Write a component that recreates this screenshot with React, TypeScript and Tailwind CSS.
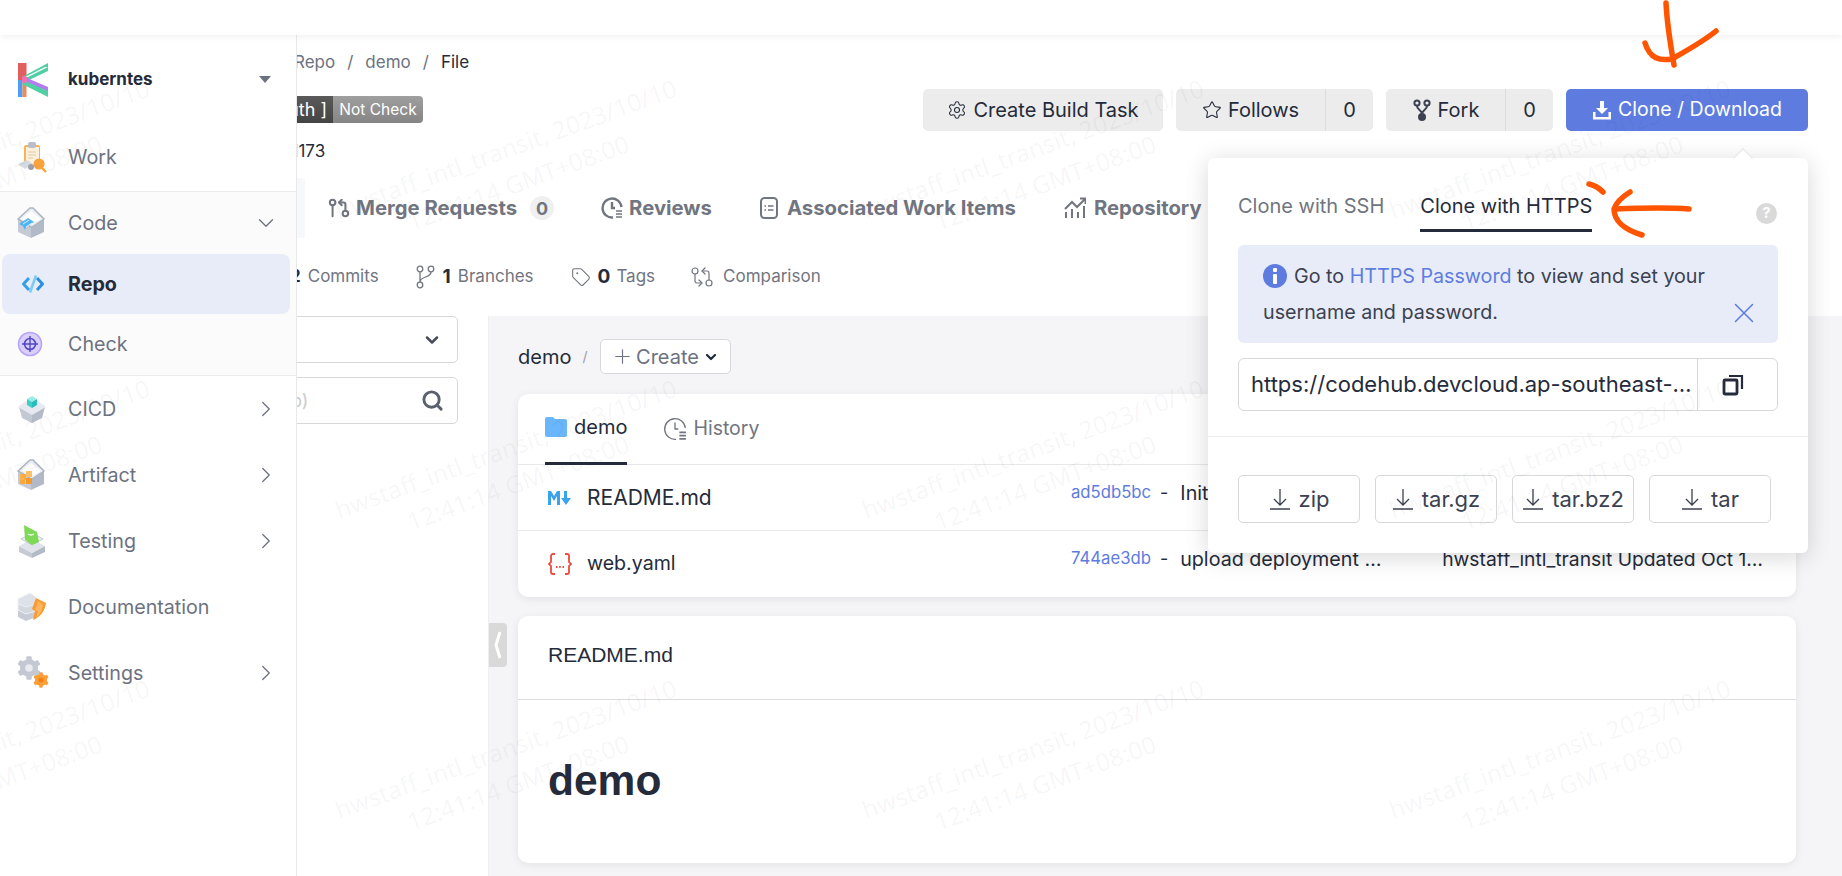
import React from "react";
import { ChevronDown, ChevronRight, GitCompareArrows, GitPullRequestArrow, Plus, Search, Settings, Star, Tag, X } from "lucide-react";

const HouseBase = ({ children }: { children?: React.ReactNode }) => (
  <svg width="29" height="32" viewBox="0 0 29 32">
    <polygon points="1,12 14,20 14,31 1,25" fill="#c5cad4" />
    <polygon points="14,20 27,12 27,25 14,31" fill="#b3bac7" />
    <polygon points="1,12 13,1 16,1 27,12 15,20 14,20" fill="#eceef2" stroke="#aeb5c2" strokeWidth="1.5" />
    <polygon points="4,12 14,4 24,12 15,17" fill="#fff" />
    {children}
  </svg>
);

const IconWork = () => (
  <svg width="30" height="32" viewBox="0 0 30 32">
    <rect x="7" y="4" width="16" height="21" rx="2" fill="#f8b25a" />
    <rect x="9" y="6" width="13" height="18" fill="#fdf0dc" />
    <rect x="11" y="1" width="8" height="6" rx="2" fill="#b9bfca" />
    <path d="M11 11h8M11 14h8M11 17h5" stroke="#e3c9a0" strokeWidth="1.2" />
    <path d="M1 23l9-4 6 4-8 5z" fill="#d5dae2" />
    <circle cx="14" cy="26" r="3" fill="#9aa1ae" />
    <circle cx="22" cy="23" r="5.5" fill="#fba33b" />
    <path d="M25 27l4 4" stroke="#fba33b" strokeWidth="2.4" />
  </svg>
);
const IconCode = () => (
  <HouseBase>
    <path d="M2 17l9-6 6 4-8 5-1 3-2-4z" fill="#4db5f5" />
    <path d="M6 17l6-4M9 20l6-4" stroke="#dff2ff" strokeWidth="1" />
  </HouseBase>
);
const IconRepo = () => (
  <svg width="24" height="20" viewBox="0 0 24 20" fill="none">
    <path d="M8 4L2.5 10 8 16" stroke="#34a0ea" strokeWidth="3" strokeLinejoin="round" />
    <path d="M16 4l5.5 6-5.5 6" stroke="#2a8fdc" strokeWidth="3" strokeLinejoin="round" />
    <path d="M15 1.5L9 18.5" stroke="#7ccbf8" strokeWidth="2.6" />
  </svg>
);
const IconCheck = () => (
  <svg width="26" height="26" viewBox="0 0 26 26" fill="none">
    <circle cx="13" cy="13" r="11.5" fill="#d9cffb" stroke="#b7a5f7" strokeWidth="1.6" />
    <circle cx="13" cy="13" r="5.5" stroke="#5246c8" strokeWidth="1.6" />
    <path d="M13 5v16M5 13h16" stroke="#5246c8" strokeWidth="1.4" />
  </svg>
);
const IconCicd = () => (
  <svg width="30" height="30" viewBox="0 0 30 30">
    <polygon points="2,13 15,20 15,29 5,24" fill="#c3c9d3" />
    <polygon points="15,20 28,13 25,24 15,29" fill="#b4bbc8" />
    <polygon points="1,13 9,7 21,7 29,13 15,21" fill="#e6e9ef" />
    <polygon points="10,5 15,2 20,5 15,8" fill="#9beee6" />
    <polygon points="10,5 15,8 15,14 10,11" fill="#3fcfc6" />
    <polygon points="15,8 20,5 20,11 15,14" fill="#27bdb8" />
  </svg>
);
const IconArtifact = () => (
  <HouseBase>
    <rect x="3" y="15" width="6" height="6" fill="#fbb04a" />
    <rect x="9" y="12" width="6" height="6" fill="#fdbf68" />
    <rect x="9" y="19" width="6" height="6" fill="#f79a2e" />
    <rect x="3" y="21" width="5" height="4" fill="#f9a93f" />
  </HouseBase>
);
const IconTesting = () => (
  <svg width="30" height="33" viewBox="0 0 30 33">
    <polygon points="2,21 15,28 15,33 2,27" fill="#c5cad4" />
    <polygon points="15,28 28,21 28,27 15,33" fill="#b3bac7" />
    <polygon points="2,21 15,14 28,21 15,28" fill="#dfe3ea" />
    <polygon points="4,14 15,8 26,14 15,20" fill="#eef0f4" stroke="#c3c9d3" />
    <polygon points="7,0 20,7 22,17 15,20 8,15" fill="#7ed957" />
    <path d="M11 9q3 2 6 0" stroke="#fff" strokeWidth="1.4" fill="none" />
  </svg>
);
const IconDoc = () => (
  <svg width="30" height="28" viewBox="0 0 30 28">
    <polygon points="1,18 12,13 19,18 19,24 9,28 1,24" fill="#c6cbd5" />
    <polygon points="1,11 12,6 19,11 19,18 9,21 1,17" fill="#d3d7df" stroke="#eef0f4" />
    <polygon points="1,6 13,0 19,4 19,11 9,14 1,11" fill="#dde1e8" stroke="#eef0f4" />
    <path d="M19 5l10 5c-1 7-5 14-13 17l2-9-3-2z" fill="#fb9a30" />
    <path d="M21 8l-3 9 3 1-2 7c4-3 6-8 7-13z" fill="#fdb55f" />
  </svg>
);
const Gear = ({ cx, cy, r, fill, hole }: { cx: number; cy: number; r: number; fill: string; hole: string }) => (
  <g>
    <circle cx={cx} cy={cy} r={r} fill={fill} />
    {[0, 60, 120].map((a) => (
      <rect key={a} x={cx - r * 0.3} y={cy - r * 1.3} width={r * 0.6} height={r * 2.6} rx="1" fill={fill} transform={`rotate(${a} ${cx} ${cy})`} />
    ))}
    <circle cx={cx} cy={cy} r={r * 0.42} fill={hole} />
  </g>
);
const IconSettings = () => (
  <svg width="34" height="34" viewBox="0 0 34 34">
    <Gear cx={12} cy={12} r={9} fill="#c3c8d2" hole="#e9ebf0" />
    <Gear cx={24} cy={24} r={6} fill="#fb9f38" hole="#f47f14" />
  </svg>
);
const IconLogo = () => (
  <svg width="30" height="34" viewBox="0 0 30 34">
    <rect x="0" y="0" width="8.5" height="17" fill="#e25f5f" />
    <rect x="0" y="17" width="4.5" height="17" fill="#4f9cf0" />
    <rect x="4.5" y="17" width="4" height="17" fill="#f08a5a" />
    <polygon points="30,0 30,8 9,18 4,14" fill="#4fcfa3" />
    <polygon points="27,4 30,4 10,14 7,14" fill="#ffffff" />
    <polygon points="9,15 30,24 30,29 6,18" fill="#b57cf0" />
    <polygon points="4,21 7,18 30,28 30,34" fill="#4fcfa3" />
    <rect x="4" y="13" width="5" height="7" rx="2" fill="#f36fb4" />
  </svg>
);

const Row = ({ icon, label, chevron, className }: { icon: React.ReactNode; label: string; chevron?: "down" | "right"; className?: string }) => (
  <div className={`flex items-center ${className ?? ""}`}>
    <div className="w-[68px] pl-[17px] flex items-center shrink-0">{icon}</div>
    <span className="flex-1 pt-[2px] text-[19.7px] text-[#6d7280]">{label}</span>
    {chevron === "down" && <ChevronDown className="mr-[17px] text-[#6d7280]" size={26} strokeWidth={1.2} />}
    {chevron === "right" && <ChevronRight className="mr-[17px] text-[#6d7280]" size={26} strokeWidth={1.2} />}
  </div>
);

const ClockLines = ({ w = 22, c = "#71757f", s = 2.4 }: { w?: number; c?: string; s?: number }) => (
  <svg width={w} height={w} viewBox="0 0 22 22" fill="none" stroke={c} strokeWidth={s}>
    <path d="M12 20.5A9.5 9.5 0 1 1 20.5 10" />
    <path d="M11 5v6h3" />
    <path d="M15 14h6M15 17h6M15 20h6" strokeWidth={1.6} />
  </svg>
);

const TabItem = ({ icon, label, className, gap = "gap-[6px]" }: { icon: React.ReactNode; label: string; className?: string; gap?: string }) => (
  <div className={`flex items-center ${gap} text-[20.3px] font-bold text-[#71757f] whitespace-nowrap ${className ?? ""}`}>
    {icon}
    <span>{label}</span>
  </div>
);

const DlButton = ({ label }: { label: string }) => (
  <div className="w-[122px] h-[48px] rounded-[5px] border border-[#d7d8da] flex items-center justify-center gap-[8px] text-[22px] text-[#3c4150]">
    <svg width="22" height="24" viewBox="0 0 22 24" fill="none" stroke="#3c4150" strokeWidth="1.3">
      <path d="M11 2v16M5 12l6 6 6-6M1 22h20" />
    </svg>
    <span>{label}</span>
  </div>
);

const GrayButton = ({ icon, label, count, className }: { icon: React.ReactNode; label: string; count?: string; className: string }) => (
  <div className={`h-[42px] bg-[#ececec] rounded-[5px] flex items-center text-[20px] text-[#252b3a] ${className}`}>
    <div className="flex-1 flex items-center justify-center gap-[6px]">
      {icon}
      <span>{label}</span>
    </div>
    {count && <div className="w-[48px] h-full border-l border-[#dcdcdc] flex items-center justify-center">{count}</div>}
  </div>
);

const waterX = [-15, 512, 1039, 1566];
const waterY = [162, 462, 762];

export default function App() {
  return (
    <div className="relative w-[1842px] h-[876px] overflow-hidden bg-white [font-family:Inter,sans-serif] text-[#252b3a]">
      <div className="relative z-20 h-[35px] bg-white shadow-[0_2px_6px_rgba(0,0,0,0.06)]" />

      {/* Header */}
      <div className="flex h-[116px] pl-[294px] pr-[34px]">
        <div className="flex-1 flex flex-col">
          <div className="flex items-center gap-[12px] h-[20px] mt-[18px] text-[17px] text-[#6d7280]">
            <span>Repo</span>
            <span>/</span>
            <span>demo</span>
            <span>/</span>
            <span className="text-[#252b3a]">File</span>
          </div>
          <div className="flex h-[30px] mt-[23px] text-[15.5px] text-white -ml-[60px]">
            <div className="w-[99px] bg-[linear-gradient(#5a5a5a,#444)] rounded-l-[4px] flex items-center justify-end pr-[6px] text-[18px]">
              <span>[ Auth ]</span>
            </div>
            <div className="w-[90px] bg-[linear-gradient(#9f9f9f,#858585)] rounded-r-[4px] flex items-center justify-center whitespace-nowrap">Not Check</div>
          </div>
          <div className="text-[17px] mt-[18px] leading-[20px] -ml-[29px]">ID: 1173</div>
        </div>
        <div className="flex gap-[13px] mt-[54px] h-[42px] ml-[-100px]">
          <GrayButton className="w-[240px]" label="Create Build Task" icon={<Settings size={20} strokeWidth={1.3} />} />
          <GrayButton className="w-[197px]" label="Follows" count="0" icon={<Star size={20} strokeWidth={1.3} />} />
          <GrayButton className="w-[167px]" label="Fork" count="0" icon={<svg width="20" height="22" viewBox="0 0 20 22" fill="none" stroke="#3c4150" strokeWidth="2"><circle cx="5" cy="4" r="2.6" /><circle cx="15" cy="4" r="2.6" /><circle cx="10" cy="18" r="3" fill="#3c4150" /><path d="M5 7c0 4 5 4 5 8M15 7c0 4-5 4-5 8" /></svg>} />
          <div className="w-[242px] h-[42px] rounded-[5px] bg-[#5e7ce0] text-white text-[19.5px] flex items-center justify-center gap-[6px]">
            <svg width="20" height="20" viewBox="0 0 20 20" fill="#fff"><path d="M8 1h4v7h4l-6 6-6-6h4z" /><path d="M1 12h2.5v5h13v-5H19v7.5H1z" /></svg>
            <span>Clone / Download</span>
          </div>
        </div>
      </div>

      {/* Tabs */}
      <div className="flex items-center h-[60px] mt-[27px]">
        <div className="w-[305px] h-full bg-[#f7f8fa] rounded-tr-[4px] shrink-0" />
        <TabItem className="ml-[23px]" icon={<GitPullRequestArrow size={22} strokeWidth={2.2} />} label="Merge Requests" />
        <div className="ml-[13px] w-[24px] h-[24px] rounded-full bg-[#f0f0f0] flex items-center justify-center text-[18px] font-bold text-[#71757f]">0</div>
        <TabItem className="ml-[47px]" icon={<ClockLines />} label="Reviews" />
        <TabItem className="ml-[48px]" gap="gap-[9px]" icon={<svg width="18" height="22" viewBox="0 0 18 22" fill="none" stroke="#71757f" strokeWidth="2"><rect x="1" y="1" width="16" height="20" rx="3.5" /><path d="M4.5 9h1.5M8 9h5.5M4.5 13h1.5M8 13h5.5" strokeWidth="1.7" /></svg>} label="Associated Work Items" />
        <TabItem className="ml-[48px]" gap="gap-[8px]" icon={<svg width="22" height="22" viewBox="0 0 22 22" fill="none" stroke="#71757f" strokeWidth="2"><path d="M2 21v-6M8 21v-9M14 21v-6M20 21V9M1 12l7-7 5 5 8-8M16 1.5h5.5V7" /></svg>} label="Repository" />
      </div>

      {/* Stats */}
      <div className="flex items-center h-[24px] mt-[27px] pl-[290px] text-[17px] text-[#71757f] whitespace-nowrap">
        <b className="text-[#252b3a]">2</b>
        <span className="ml-[7px]">Commits</span>
        <svg className="ml-[37px]" width="20" height="24" viewBox="0 0 20 24" fill="none" stroke="#71757f" strokeWidth="1.3">
          <circle cx="4" cy="4" r="2.8" /><circle cx="15" cy="4" r="2.8" /><circle cx="4" cy="20" r="2.8" />
          <path d="M4 7v10M15 7c0 6-11 4-11 10" />
        </svg>
        <b className="ml-[7px] text-[#252b3a] text-[19px]">1</b>
        <span className="ml-[7px]">Branches</span>
        <Tag className="ml-[37px]" size={20} strokeWidth={1.3} />
        <b className="ml-[7px] text-[#252b3a] text-[19px]">0</b>
        <span className="ml-[6px]">Tags</span>
        <GitCompareArrows className="ml-[35px]" size={24} strokeWidth={1.2} />
        <span className="ml-[9px]">Comparison</span>
      </div>

      {/* Body */}
      <div className="flex h-[560px] mt-[27px]">
        <div className="w-[488px] shrink-0 pr-[30px] flex flex-col gap-[14px]">
          <div className="h-[47px] border border-[#d7d8da] rounded-[5px] flex items-center justify-end pr-[15px]">
            <ChevronDown size={20} strokeWidth={3} className="text-[#4a4f5c]" />
          </div>
          <div className="h-[47px] border border-[#d7d8da] rounded-[5px] flex items-center justify-between pl-[290px] pr-[13px] text-[18px] text-[#c9cbd0]">
            <span>p)</span>
            <Search size={23} strokeWidth={3} className="text-[#5b606d]" />
          </div>
        </div>
        <div className="relative flex-1 bg-[#f5f5f7] border-l border-[#eeeef0] pl-[29px] pr-[46px]">
          <div className="absolute left-0 top-[307px] w-[18px] h-[44px] bg-[#d9d9d9] rounded-r-[4px] flex items-center justify-center">
            <svg width="8" height="28" viewBox="0 0 8 28" fill="none" stroke="#fff" strokeWidth="3"><path d="M6 1L2 14l4 13" /></svg>
          </div>
          <div className="flex items-center h-[35px] mt-[23px]">
            <span className="text-[20px] text-[#252b3a]">demo</span>
            <span className="ml-[11px] text-[14px] text-[#9a9da5]">/</span>
            <div className="ml-[13px] w-[131px] h-[35px] rounded-[5px] bg-white border border-[#d7d8da] flex items-center justify-center gap-[2px] pr-[2px] text-[20px] text-[#6d7280]">
              <Plus size={23} strokeWidth={1.2} />
              <span>Create</span>
              <ChevronDown size={16} strokeWidth={3.4} className="text-[#252b3a] ml-[2px]" />
            </div>
          </div>
          <div className="mt-[20px] h-[203px] bg-white rounded-[10px] shadow-[0_2px_8px_rgba(0,0,0,0.08)]">
            <div className="relative flex h-[71px] border-b border-[#e8e8ea] pl-[27px] text-[20px]">
              <div className="flex items-center h-[71px] gap-[7px] pb-[2px] border-b-[3px] border-[#252b3a]">
                <svg width="22" height="20" viewBox="0 0 22 20"><path d="M0 2a2 2 0 0 1 2-2h6l2 2h10a2 2 0 0 1 2 2v14a2 2 0 0 1-2 2H2a2 2 0 0 1-2-2z" fill="#69b6fb" /></svg>
                <span>demo</span>
              </div>
              <div className="ml-[36px] flex items-center gap-[6px] text-[#71757f] text-[19.5px]">
                <ClockLines w={24} s={1.2} />
                <span>History</span>
              </div>
            </div>
            <div className="flex items-center h-[66px] border-b border-[#e8e8ea] pl-[30px]">
              <svg width="24" height="16" viewBox="0 0 24 16" fill="#39a3ee" className="shrink-0"><path d="M0 15V1h3l3 5 3-5h3v14H9V6l-3 5-3-5v9z" /><path d="M16 1h3v7h4l-5 7-5-7h3z" /></svg>
              <span className="ml-[15px] w-[484px] text-[21px]">README.md</span>
              <span className="text-[16.7px] text-[#5e7ce0] -mt-[10px]">ad5db5bc</span>
              <span className="ml-[9px] text-[18px] -mt-[10px]">-</span>
              <span className="ml-[12px] text-[19.7px] -mt-[8px] whitespace-nowrap">Initial commit</span>
            </div>
            <div className="flex items-center h-[65px] pl-[30px]">
              <svg width="24" height="24" viewBox="0 0 24 24" fill="none" stroke="#f0483e" strokeWidth="1.8" className="shrink-0"><path d="M7 2H5a2 2 0 0 0-2 2v6l-2 2 2 2v6a2 2 0 0 0 2 2h2M17 2h2a2 2 0 0 1 2 2v6l2 2-2 2v6a2 2 0 0 1-2 2h-2" /><path d="M8 15h1.5M11.2 15h1.5M14.5 15H16" strokeWidth="2" /></svg>
              <span className="ml-[15px] w-[484px] text-[19.6px]">web.yaml</span>
              <span className="text-[16.7px] text-[#5e7ce0] -mt-[10px]">744ae3db</span>
              <span className="ml-[9px] text-[18px] -mt-[10px]">-</span>
              <span className="ml-[12px] w-[262px] text-[19.7px] -mt-[8px] whitespace-nowrap">upload deployment …</span>
              <span className="text-[19.3px] -mt-[8px] whitespace-nowrap">hwstaff_intl_transit Updated Oct 1…</span>
            </div>
          </div>
          <div className="mt-[19px] h-[247px] bg-white rounded-[10px] shadow-[0_2px_8px_rgba(0,0,0,0.08)] [font-family:'Liberation_Sans',sans-serif]">
            <div className="h-[84px] border-b border-[#dcdcde] pl-[30px] pb-[6px] flex items-center text-[21px]">README.md</div>
            <div className="pl-[30px] mt-[53px] text-[42.5px] font-bold leading-[56px]">demo</div>
          </div>
        </div>
      </div>

      {/* Sidebar drawer */}
      <div className="absolute left-0 top-[35px] bottom-0 z-10 w-[297px] bg-white border-r border-[#e8e8ea]">
        <div className="flex items-center h-[74px] pt-[15px] pl-[18px] pr-[25px]">
          <IconLogo />
          <span className="ml-[20px] flex-1 text-[17px] font-bold text-[#252b3a]">kuberntes</span>
          <span className="w-0 h-0 border-l-[6px] border-r-[6px] border-t-[7px] border-l-transparent border-r-transparent border-t-[#6d7280]" />
        </div>
        <Row className="h-[82px] pt-[14px]" icon={<IconWork />} label="Work" />
        <div className="h-[185px] bg-[#fbfbfb] border-y border-[#ececee]">
          <Row className="h-[62px]" icon={<IconCode />} label="Code" chevron="down" />
          <div className="mx-[2px] w-[288px] h-[60px] rounded-[8px] bg-[#e8ecf8] flex items-center">
            <div className="w-[66px] pl-[19px]"><IconRepo /></div>
            <span className="pt-[2px] text-[19.7px] font-bold text-[#252b3a]">Repo</span>
          </div>
          <Row className="h-[60px]" icon={<IconCheck />} label="Check" />
        </div>
        <Row className="h-[66px]" icon={<IconCicd />} label="CICD" chevron="right" />
        <Row className="h-[66px]" icon={<IconArtifact />} label="Artifact" chevron="right" />
        <Row className="h-[66px]" icon={<IconTesting />} label="Testing" chevron="right" />
        <Row className="h-[66px]" icon={<IconDoc />} label="Documentation" />
        <Row className="h-[66px]" icon={<IconSettings />} label="Settings" chevron="right" />
      </div>

      {/* Clone popover */}
      <div className="absolute left-[1208px] top-[158px] z-20 w-[600px] h-[395px] bg-white rounded-[6px] shadow-[0_4px_24px_rgba(0,0,0,0.16)]">
        <div className="absolute -top-[7px] left-[528px] w-[14px] h-[14px] bg-white rotate-45 border-l border-t border-[#e4e4e6]" />
        <div className="flex h-[74px] mx-[30px] text-[20px] relative">
          <div className="flex items-center h-[74px] pt-[24px] pb-[2px] text-[#71757f]">Clone with SSH</div>
          <div className="ml-[36px] flex items-center h-[74px] pt-[24px] border-b-[3px] border-[#252b3a]">Clone with HTTPS</div>
          <div className="absolute right-[1px] top-[45px] w-[21px] h-[21px] rounded-full bg-[#d9d9d9] text-white font-bold text-[15px] flex items-center justify-center">?</div>
        </div>
        <div className="relative mx-[30px] mt-[13px] h-[98px] rounded-[6px] bg-[#e8ecf8] px-[25px] pt-[13px] text-[19.7px] leading-[36px] text-[#3c4150]">
          <div className="flex items-center gap-[7px]">
            <span className="w-[24px] h-[24px] rounded-full bg-[#5e7ce0] flex items-center justify-center shrink-0">
              <svg width="6" height="16" viewBox="0 0 6 16" fill="#fff"><rect x="1" y="0" width="4" height="4" rx="1" /><rect x="1" y="6" width="4" height="10" rx="1" /></svg>
            </span>
            <span className="whitespace-nowrap">Go to <span className="text-[#5e7ce0]">HTTPS Password</span> to view and set your</span>
          </div>
          <div>username and password.</div>
          <X className="absolute right-[17px] top-[51px] text-[#5e7ce0]" size={34} strokeWidth={1.1} />
        </div>
        <div className="mx-[30px] mt-[15px] h-[53px] rounded-[6px] border border-[#d7d8da] flex items-center">
          <div className="flex-1 min-w-0 pl-[12px] text-[22px] whitespace-nowrap">https://codehub.devcloud.ap-southeast-…</div>
          <div className="w-[80px] h-full border-l border-[#d7d8da] flex items-center justify-center shrink-0 pr-[10px]">
            <svg width="22" height="22" viewBox="0 0 22 22" fill="none" stroke="#252b3a" strokeWidth="2.8"><rect x="2" y="6" width="13" height="14" rx="1" /><path d="M7 2h13v13" strokeWidth="2.2" /></svg>
          </div>
        </div>
        <div className="mt-[25px] border-t border-[#ececee] pt-[38px] pl-[30px] flex gap-[15px]">
          <DlButton label="zip" />
          <DlButton label="tar.gz" />
          <DlButton label="tar.bz2" />
          <DlButton label="tar" />
        </div>
      </div>

      {/* Watermark */}
      <div className="absolute inset-0 z-30 pointer-events-none">
        {waterY.flatMap((y) =>
          waterX.map((x) => (
            <div
              key={`${x}-${y}`}
              className="absolute w-[400px] -ml-[200px] -mt-[32px] -rotate-20 text-center text-[24.5px] leading-[36px] text-black/[0.045] [font-family:'Noto_Sans',sans-serif] whitespace-nowrap"
              style={{ left: x, top: y }}
            >
              <div>hwstaff_intl_transit, 2023/10/10</div>
              <div>12:41:14 GMT+08:00</div>
            </div>
          ))
        )}
      </div>

      {/* Hand-drawn annotations */}
      <svg className="absolute inset-0 z-40 pointer-events-none" width="1842" height="876" fill="none" stroke="#ff5500" strokeWidth="5.5" strokeLinecap="round" strokeLinejoin="round">
        <path d="M1666 3c1 20 5 45 8 62" />
        <path d="M1716 31c-12 10-30 20-44 28-12 2-22 0-27-16" />
        <path d="M1689 209c-25-2-50-1-74 0" />
        <path d="M1630 192c-8 5-14 11-16 17 0 10 8 20 28 26" />
        <path d="M1589 184c5 1 10 4 14 8" />
      </svg>
    </div>
  );
}
